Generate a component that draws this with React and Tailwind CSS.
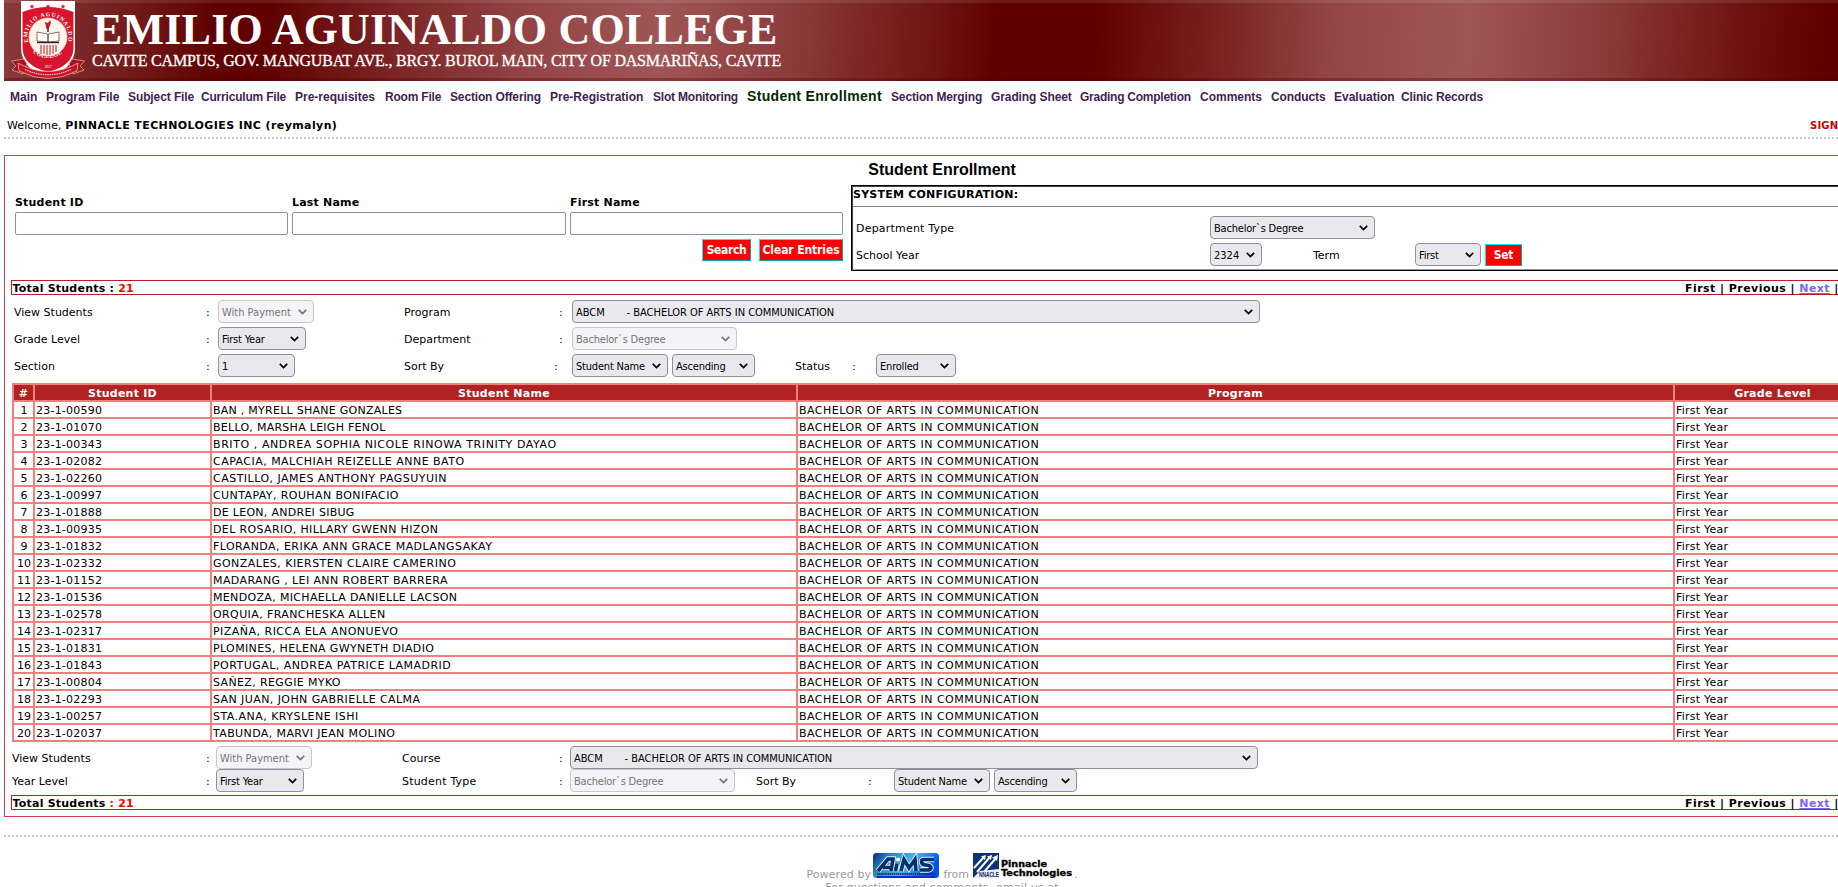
import React from "react";

const students = [
  ["23-1-00590", "BAN , MYRELL SHANE GONZALES", "tracking-[0.26px]"],
  ["23-1-01070", "BELLO, MARSHA LEIGH FENOL", "tracking-[0.27px]"],
  ["23-1-00343", "BRITO , ANDREA SOPHIA NICOLE RINOWA TRINITY DAYAO", "tracking-[0.58px]"],
  ["23-1-02082", "CAPACIA, MALCHIAH REIZELLE ANNE BATO", "tracking-[0.47px]"],
  ["23-1-02260", "CASTILLO, JAMES ANTHONY PAGSUYUIN", "tracking-[0.48px]"],
  ["23-1-00997", "CUNTAPAY, ROUHAN BONIFACIO", "tracking-[0.41px]"],
  ["23-1-01888", "DE LEON, ANDREI SIBUG", "tracking-[0.28px]"],
  ["23-1-00935", "DEL ROSARIO, HILLARY GWENN HIZON", "tracking-[0.37px]"],
  ["23-1-01832", "FLORANDA, ERIKA ANN GRACE MADLANGSAKAY", "tracking-[0.45px]"],
  ["23-1-02332", "GONZALES, KIERSTEN CLAIRE CAMERINO", "tracking-[0.47px]"],
  ["23-1-01152", "MADARANG , LEI ANN ROBERT BARRERA", "tracking-[0.39px]"],
  ["23-1-01536", "MENDOZA, MICHAELLA DANIELLE LACSON", "tracking-[0.34px]"],
  ["23-1-02578", "ORQUIA, FRANCHESKA ALLEN", "tracking-[0.4px]"],
  ["23-1-02317", "PIZAÑA, RICCA ELA ANONUEVO", "tracking-[0.48px]"],
  ["23-1-01831", "PLOMINES, HELENA GWYNETH DIADIO", "tracking-[0.37px]"],
  ["23-1-01843", "PORTUGAL, ANDREA PATRICE LAMADRID", "tracking-[0.46px]"],
  ["23-1-00804", "SAÑEZ, REGGIE MYKO", "tracking-[0.37px]"],
  ["23-1-02293", "SAN JUAN, JOHN GABRIELLE CALMA", "tracking-[0.42px]"],
  ["23-1-00257", "STA.ANA, KRYSLENE ISHI", "tracking-[0.47px]"],
  ["23-1-02037", "TABUNDA, MARVI JEAN MOLINO", "tracking-[0.39px]"],
];

const menu = [
  ["Main", "w-[36px]"],
  ["Program File", "w-[82px]"],
  ["Subject File", "w-[73px] tracking-[-0.1px]"],
  ["Curriculum File", "w-[94px] tracking-[-0.2px]"],
  ["Pre-requisites", "w-[90px]"],
  ["Room File", "w-[65px] tracking-[-0.2px]"],
  ["Section Offering", "w-[100px] tracking-[-0.15px]"],
  ["Pre-Registration", "w-[103px]"],
  ["Slot Monitoring", "w-[94px] tracking-[-0.2px]"],
  ["Student Enrollment", "w-[144px] pb-[1px] text-[14px] text-[#002800] tracking-[0.32px]"],
  ["Section Merging", "w-[100px] tracking-[-0.15px]"],
  ["Grading Sheet", "w-[89px] tracking-[-0.1px]"],
  ["Grading Completion", "w-[120px] tracking-[-0.25px]"],
  ["Comments", "w-[71px]"],
  ["Conducts", "w-[63px] tracking-[-0.1px]"],
  ["Evaluation", "w-[67px]"],
  ["Clinic Records", "w-[90px] tracking-[-0.15px]"],
];

function Select({ children, className = "", disabled = false, tracking = "tracking-[-0.2px]" }) {
  return (
    <div
      className={
        "flex h-[23px] shrink-0 items-center justify-between rounded-[4px] border pr-[6px] pl-[3px] font-['DejaVu_Sans_Condensed','DejaVu_Sans',sans-serif] text-[11px] whitespace-pre " +
        (disabled ? "border-[#c7c7cf] bg-[#f4f4f6] text-[#747478] " : "border-[#8f8f9d] bg-[#e9e9ed] text-black ") +
        className
      }
    >
      <span className={"pt-[1px] " + tracking}>{children}</span>
      <svg width="9" height="6" viewBox="0 0 9 6" fill="none" stroke="currentColor" strokeWidth="1.7">
        <path d="M0.8 0.8 L4.5 4.5 L8.2 0.8" />
      </svg>
    </div>
  );
}

function Button({ children, className = "" }) {
  return (
    <button
      className={
        "flex h-[22px] shrink-0 items-center justify-center border border-t-[#00f0f0] border-r-[#00a8a8] border-b-[#00a8a8] border-l-[#00f0f0] bg-[#ff0000] pt-[1px] font-['DejaVu_Sans_Condensed','DejaVu_Sans',sans-serif] text-[12px] font-bold whitespace-nowrap text-white " +
        className
      }
    >
      {children}
    </button>
  );
}

function Cell({ w, children }) {
  return (
    <span className={"shrink-0 pt-[1px] whitespace-nowrap " + w + (children === ":" ? " pl-[1px]" : "")}>{children}</span>
  );
}

function TotalBar({ redColon = false }) {
  return (
    <div className="ml-[6px] flex h-[15px] w-[1864px] items-start border border-[#b22222] pt-[1px] leading-[13px] font-bold whitespace-nowrap">
      <span className="w-[1673px] pl-[0.5px] tracking-[0.22px]">
        Total Students <span className={redColon ? "text-[#ff0000]" : ""}>:</span>{" "}
        <span className="text-[#ff0000]">21</span>
      </span>
      <span className="tracking-[0.45px]">
        First | Previous | <a className="text-[#7b68ee] underline">Next</a> | Last
      </span>
    </div>
  );
}

function Crest() {
  return (
    <svg width="74" height="80" viewBox="0 0 74 80" className="shrink-0">
      <path d="M10 1 H64 V48 Q64 68 37 78 Q10 68 10 48 Z" fill="#fff" />
      <path d="M11.500 12 Q37 2 62.500 12 V48 Q62 66 37 72 Q12 66 11.500 48 Z" fill="#d8152c" />
      <path d="M0.500 61 L13 59 L16 64 L12 74 L1 70 L5 66 Z" fill="#a81224" stroke="#e9b9a0" strokeWidth="0.700" />
      <path d="M73.500 61 L61 59 L58 64 L62 74 L73 70 L69 66 Z" fill="#a81224" stroke="#e9b9a0" strokeWidth="0.700" />
      <path d="M7 63 Q37 80 67 63 L66 71 Q37 86 8 71 Z" fill="#c8142a" stroke="#eecab8" strokeWidth="0.700" />
      {[21, 37, 52].map((x) => (
        <path
          key={x}
          transform={`translate(${x} 6.500)`}
          d="M0 -2.600 L0.700 -0.800 L2.500 -0.800 L1.100 0.400 L1.600 2.200 L0 1.100 L-1.600 2.200 L-1.100 0.400 L-2.500 -0.800 L-0.700 -0.800 Z"
          fill="#d8152c"
        />
      ))}
      <circle cx="37" cy="37" r="19" fill="#fdf6ec" stroke="#f1d9c0" strokeWidth="0.800" />
      <path id="crest-top" d="M17.500 43 A 20.500 20.500 0 1 1 56.500 43" fill="none" />
      <path id="crest-bottom" d="M16 45 A 23.500 23.500 0 0 0 58 45" fill="none" />
      <text fontSize="5.800" fontWeight="700" fill="#fff" fontFamily="Liberation Serif, serif">
        <textPath href="#crest-top" startOffset="1" textLength="74">EMILIO AGUINALDO</textPath>
      </text>
      <text fontSize="6" fontWeight="700" fill="#fff" fontFamily="Liberation Serif, serif">
        <textPath href="#crest-bottom" startOffset="9" textLength="32">COLLEGE</textPath>
      </text>
      <text x="37" y="67.500" textAnchor="middle" fontSize="3.500" fill="#fff" fontFamily="Liberation Serif, serif">1957</text>
      <path d="M35.500 29 L34 22 L37 23 L39 20 L40 23 L37.500 29 Z" fill="#d8152c" />
      <path d="M37 27 V32" stroke="#5a2a2a" strokeWidth="1.500" />
      <path d="M26 32 L36.500 34 L37 42 L26 41 Z M48 32 L37.500 34 L37 42 L48 41 Z" fill="#fff" stroke="#4a3030" strokeWidth="0.700" />
      <path d="M26 42.500 H48" stroke="#3a2020" strokeWidth="1.400" />
      <path d="M30 45 V54 M33 45 V54 M36 45 V55 M39 45 V55 M42 45 V54 M45 45 V52" stroke="#d8484f" strokeWidth="1.300" />
      <path d="M14 69.500 Q37 80 60 69.500" stroke="#f3c3bd" strokeWidth="1.300" strokeDasharray="1.500 0.800" fill="none" />
    </svg>
  );
}

function AimsLogo() {
  return (
    <svg width="66" height="25" viewBox="0 0 66 25" className="shrink-0">
      <defs>
        <linearGradient id="aims" x1="0" x2="1" y1="0" y2="0.300">
          <stop offset="0" stopColor="#0a1f8c" />
          <stop offset="0.250" stopColor="#2c86b8" />
          <stop offset="0.600" stopColor="#4bb4e4" />
          <stop offset="0.850" stopColor="#1078f0" />
          <stop offset="1" stopColor="#0050f0" />
        </linearGradient>
      </defs>
      <rect width="66" height="25" rx="3.500" fill="url(#aims)" />
      <path d="M4 24 H62" stroke="#0030d8" strokeWidth="2" />
      <g fill="none" strokeLinejoin="miter">
        <g stroke="#d9f3fa" strokeWidth="5.400">
          <path d="M5 18 L15 6 H20 L18 18 M10 14.500 H18" />
          <path d="M24 10.500 L22.500 18" />
          <path d="M28 18 L31 6.500 L36 15 L42 6.500 L43 18" />
          <path d="M61 6.500 H51 Q48 6.500 48.500 9 Q49 12 53 12 Q58.500 12.500 58 15 Q57.500 17 54 17 H47" />
        </g>
        <g stroke="#06306c" strokeWidth="3.600">
          <path d="M5 18 L15 6 H20 L18 18 M10 14.500 H18" />
          <path d="M24 10.500 L22.500 18" />
          <path d="M28 18 L31 6.500 L36 15 L42 6.500 L43 18" />
          <path d="M61 6.500 H51 Q48 6.500 48.500 9 Q49 12 53 12 Q58.500 12.500 58 15 Q57.500 17 54 17 H47" />
        </g>
      </g>
      <circle cx="25" cy="6.500" r="2" fill="#fff" />
      <path d="M4 21 H62" stroke="#0a2050" strokeWidth="1.500" strokeDasharray="1.500 0.600" />
    </svg>
  );
}

function PinnacleLogo() {
  return (
    <svg width="101" height="25" viewBox="0 0 101 25" className="shrink-0">
      <rect width="26" height="25" fill="#0a3478" />
      <path d="M1 15 L11 4 M4 19 L17 4 M11 19 L23 5" stroke="#fff" strokeWidth="2" />
      <path d="M8 3.500 L13 2 L12 7 Z M14 3.500 L19 2 L18 7 Z M19 4.500 L25 2 L24 8 Z" fill="#fff" />
      <path d="M0 25 L7 18 L26 16 V25 Z" fill="#e8ecf6" />
      <text x="6" y="24" fontSize="6.500" fontWeight="700" fill="#18246c" textLength="20" lengthAdjust="spacingAndGlyphs" fontFamily="Liberation Sans, sans-serif">NNACLE</text>
      <text x="28" y="13.500" fontSize="8" fontWeight="700" textLength="46" lengthAdjust="spacingAndGlyphs" stroke="#000" strokeWidth="0.300" fontFamily="DejaVu Sans, sans-serif">Pinnacle</text>
      <text x="28" y="22.500" fontSize="8" fontWeight="700" textLength="71" lengthAdjust="spacingAndGlyphs" stroke="#000" strokeWidth="0.300" fontFamily="DejaVu Sans, sans-serif">Technologies</text>
    </svg>
  );
}

const program = "ABCM       - BACHELOR OF ARTS IN COMMUNICATION";

export default function App() {
  return (
    <div className="h-[887px] w-full overflow-hidden bg-white font-['DejaVu_Sans',sans-serif] text-[11px] leading-[13px] text-black">
      <div className="ml-[4px] flex w-[1876px] flex-col">
        <header className="flex h-[81px] border-t-[3px] border-b-[3px] border-t-[#ffffff18] border-b-[#50000050] bg-[linear-gradient(93deg,#8a3a3c_0%,#711a1a_7%,#600000_11.500%,#600000_14%,#7c2526_21%,#934546_28%,#a05656_35%,#8c3b3b_42%,#6c1212_50%,#600000_53%,#600000_58%,#7a2424_65%,#954747_71%,#a05656_78%,#8c3b3b_85%,#6c1010_93%,#600000_97%,#600000_100%)] bg-origin-border">
          <div className="-mt-[3px] ml-[7px]">
            <Crest />
          </div>
          <div className="flex flex-col pt-[5px] font-['Liberation_Serif',serif] whitespace-nowrap text-white">
            <h1 className="ml-[8px] h-[43px] text-[44px] leading-[44px] font-bold tracking-[0.2px]">EMILIO AGUINALDO COLLEGE</h1>
            <p className="ml-[7px] text-[16px] leading-[20px] tracking-[-0.21px] [-webkit-text-stroke:0.3px_#fff]">
              CAVITE CAMPUS, GOV. MANGUBAT AVE., BRGY. BUROL MAIN, CITY OF DASMARIÑAS, CAVITE
            </p>
          </div>
        </header>

        <nav className="flex h-[32px] items-center pl-[6px] font-['Liberation_Sans',sans-serif] text-[12px] font-bold text-[#3f1f58]">
          {menu.map(([label, cls]) => (
            <a key={label} className={"shrink-0 whitespace-nowrap " + cls}>
              {label}
            </a>
          ))}
        </nav>

        <div className="flex h-[24px] items-center pl-[3px] whitespace-nowrap">
          <span className="w-[1803px] tracking-[0.1px]">
            Welcome, <b className="tracking-[0.4px]">PINNACLE TECHNOLOGIES INC (reymalyn)</b>
          </span>
          <b className="text-[10px] tracking-[0.2px] text-[#cc0000]">SIGN OUT</b>
        </div>
        <div className="h-[2px] bg-[repeating-linear-gradient(90deg,#cacaca_0_2px,transparent_2px_4px)]" />

        <main className="mt-[16px] h-[662px] border border-[#d04050]">
          <h2 className="flex h-[29px] items-center justify-center pb-[2px] font-['Liberation_Sans',sans-serif] text-[16px] font-bold">
            Student Enrollment
          </h2>

          <section className="flex h-[86px]">
            <div className="flex w-[846px] flex-col pt-[11px] pl-[10px]">
              <div className="flex gap-[4px] font-bold tracking-[0.2px]">
                {[
                  ["Student ID", "w-[273px]"],
                  ["Last Name", "w-[274px]"],
                  ["First Name", "w-[273px]"],
                ].map(([label, w]) => (
                  <label key={label} className={"flex flex-col gap-[3px] " + w}>
                    {label}
                    <input className="h-[23px] w-full rounded-[2px] border border-[#8f8f9d] bg-white" />
                  </label>
                ))}
              </div>
              <div className="mt-[4px] flex gap-[8px] pl-[687px]">
                <Button className="w-[49px] tracking-[-0.35px]">Search</Button>
                <Button className="w-[84px] tracking-[-0.1px]">Clear Entries</Button>
              </div>
            </div>
            <div className="h-[86px] flex-1 border border-black">
              <div className="h-full border border-t-[#444] border-r-[#999] border-b-[#999] border-l-[#444]">
                <div className="flex h-[20px] items-center border-b border-[#808080] pb-[4px] font-bold tracking-[0.23px]">SYSTEM CONFIGURATION:</div>
                <div className="flex flex-col gap-[4px] pt-[9px] pl-[3px]">
                  <div className="flex items-center">
                    <Cell w="w-[354px] tracking-[0.2px]">Department Type</Cell>
                    <Select className="w-[165px]">Bachelor`s Degree</Select>
                  </div>
                  <div className="flex items-center">
                    <Cell w="w-[354px]">School Year</Cell>
                    <Select className="w-[52px]" tracking="tracking-[0px]">2324</Select>
                    <Cell w="ml-[51px] w-[102px]">Term</Cell>
                    <Select className="w-[66px]">First</Select>
                    <Button className="ml-[4px] w-[37px] tracking-[-0.2px]">Set</Button>
                  </div>
                </div>
              </div>
            </div>
          </section>

          <div className="mt-[9px]">
            <TotalBar />
          </div>

          <section className="flex flex-col gap-[4px] pt-[5px] pl-[9px]">
            <div className="flex items-center">
              <Cell w="w-[191px]">View Students</Cell>
              <Cell w="w-[13px]">:</Cell>
              <Select disabled className="w-[96px]" tracking="tracking-[0px]">With Payment</Select>
              <Cell w="ml-[90px] w-[154px]">Program</Cell>
              <Cell w="w-[14px]">:</Cell>
              <Select className="w-[688px]" tracking="tracking-[-0.02px]">{program}</Select>
            </div>
            <div className="flex items-center">
              <Cell w="w-[191px]">Grade Level</Cell>
              <Cell w="w-[13px]">:</Cell>
              <Select className="w-[88px]">First Year</Select>
              <Cell w="ml-[98px] w-[154px]">Department</Cell>
              <Cell w="w-[14px]">:</Cell>
              <Select disabled className="w-[165px]">Bachelor`s Degree</Select>
            </div>
            <div className="flex items-center">
              <Cell w="w-[191px]">Section</Cell>
              <Cell w="w-[13px]">:</Cell>
              <Select className="w-[77px]">1</Select>
              <Cell w="ml-[109px] w-[149px]">Sort By</Cell>
              <Cell w="w-[19px]">:</Cell>
              <Select className="w-[96px]">Student Name</Select>
              <Select className="ml-[4px] w-[83px]">Ascending</Select>
              <Cell w="ml-[40px] w-[56px]">Status</Cell>
              <Cell w="w-[25px]">:</Cell>
              <Select className="w-[80px]">Enrolled</Select>
            </div>
          </section>

          <table className="mt-[6px] ml-[7px] w-[1860px] table-fixed border-separate border-spacing-[2px] bg-[#f08080] whitespace-nowrap">
            <colgroup>
              <col className="w-[19px]" />
              <col className="w-[175px]" />
              <col className="w-[584px]" />
              <col className="w-[875px]" />
              <col />
            </colgroup>
            <thead>
              <tr className="bg-[#b22222] tracking-[0.25px] text-white">
                {["#", "Student ID", "Student Name", "Program", "Grade Level"].map((h) => (
                  <th key={h} className="h-[15px] p-0 pt-[2px] text-center leading-[13px] font-bold">
                    {h}
                  </th>
                ))}
              </tr>
            </thead>
            <tbody>
              {students.map(([id, name, tracking], i) => (
                <tr key={id} className="bg-white leading-[13px]">
                  <td className="h-[15px] pt-[2px] pr-[1px] pb-0 pl-[2px] text-center">{i + 1}</td>
                  <td className="px-[1px] pt-[2px] pb-0 tracking-[0.22px]">{id}</td>
                  <td className={"px-[1px] pt-[2px] pb-0 " + tracking}>{name}</td>
                  <td className="px-[1px] pt-[2px] pb-0 tracking-[0.48px]">BACHELOR OF ARTS IN COMMUNICATION</td>
                  <td className="px-[1px] pt-[2px] pb-0 tracking-[0.22px]">First Year</td>
                </tr>
              ))}
            </tbody>
          </table>

          <section className="mb-[3px] flex flex-col pt-[4px] pl-[7px]">
            <div className="flex items-center">
              <Cell w="w-[193px]">View Students</Cell>
              <Cell w="w-[11px]">:</Cell>
              <Select disabled className="w-[96px]" tracking="tracking-[0px]">With Payment</Select>
              <Cell w="ml-[90px] w-[156px]">Course</Cell>
              <Cell w="w-[12px]">:</Cell>
              <Select className="w-[688px]" tracking="tracking-[-0.02px]">{program}</Select>
            </div>
            <div className="flex items-center">
              <Cell w="w-[193px]">Year Level</Cell>
              <Cell w="w-[11px]">:</Cell>
              <Select className="w-[88px]">First Year</Select>
              <Cell w="ml-[98px] w-[156px] tracking-[0.2px]">Student Type</Cell>
              <Cell w="w-[12px]">:</Cell>
              <Select disabled className="w-[165px]">Bachelor`s Degree</Select>
              <Cell w="ml-[21px] w-[111px]">Sort By</Cell>
              <Cell w="w-[27px]">:</Cell>
              <Select className="w-[96px]">Student Name</Select>
              <Select className="ml-[4px] w-[83px]">Ascending</Select>
            </div>
          </section>
          <TotalBar redColon />
        </main>

        <div className="mt-[18px] h-[2px] bg-[repeating-linear-gradient(90deg,#cacaca_0_2px,transparent_2px_4px)]" />
        <footer className="flex flex-col items-center pt-[16px] whitespace-nowrap text-[#999]">
          <div className="flex items-end">
            <span className="w-[67px] leading-[7px] tracking-[0.1px]">Powered by</span>
            <AimsLogo />
            <span className="mr-[4px] ml-[4px] leading-[7px]">from</span>
            <PinnacleLogo />
            <span className="leading-[7px]">.</span>
          </div>
          <p className="mt-[3px] tracking-[0.15px]">For questions and comments, email us at</p>
        </footer>
      </div>
    </div>
  );
}
